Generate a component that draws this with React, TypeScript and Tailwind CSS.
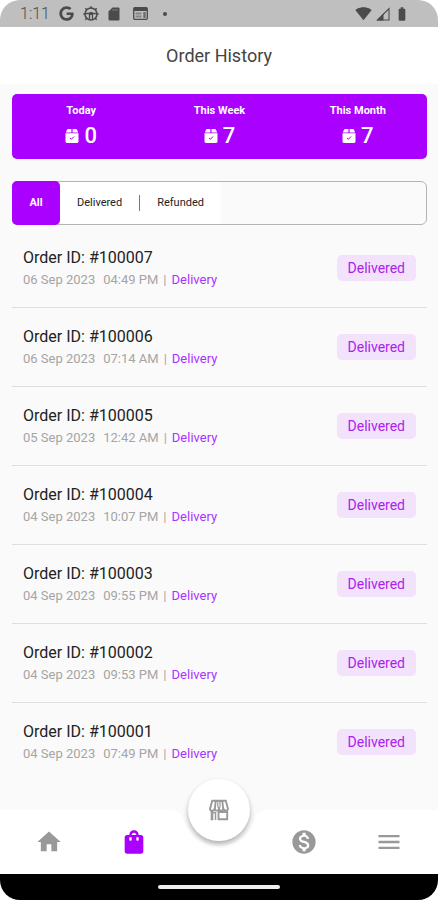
import React from "react";
import { FaGoogle } from "react-icons/fa6";
import {
	MdBatteryFull,
	MdHome,
	MdMenu,
	MdMonetizationOn,
	MdShoppingBag,
	MdSignalWifi4Bar,
} from "react-icons/md";

const stats = [
	{ label: "Today", count: 0 },
	{ label: "This Week", count: 7 },
	{ label: "This Month", count: 7 },
];

const orders = [
	{ id: "100007", date: "06 Sep 2023", time: "04:49 PM" },
	{ id: "100006", date: "06 Sep 2023", time: "07:14 AM" },
	{ id: "100005", date: "05 Sep 2023", time: "12:42 AM" },
	{ id: "100004", date: "04 Sep 2023", time: "10:07 PM" },
	{ id: "100003", date: "04 Sep 2023", time: "09:55 PM" },
	{ id: "100002", date: "04 Sep 2023", time: "09:53 PM" },
	{ id: "100001", date: "04 Sep 2023", time: "07:49 PM" },
];

const BoxIcon = () => (
	<svg width="14" height="14" viewBox="0 0 14 14" fill="none">
		<path d="M3 0h3.400v3.600H.8L2 .8Q2.300 0 3 0Z" fill="#fff" />
		<path d="M11 0H7.600v3.600h5.600L12 .8Q11.700 0 11 0Z" fill="#fff" />
		<path d="M.5 4.300h13v8.300Q13.500 14 12.100 14H1.900Q.5 14 .5 12.600Z" fill="#fff" />
		<path d="m5 9 1.400 1.300L9 7.500" stroke="#aa00ff" strokeWidth="1" />
	</svg>
);

const WheelIcon = () => (
	<svg width="16" height="16" viewBox="0 0 16 16" fill="none" stroke="#4b4b4b">
		<circle cx="8" cy="8" r="6" strokeWidth="1.600" />
		<path d="M2 7.500h12M6.500 8v6M9.500 8v6" strokeWidth="1.300" />
		<circle cx="8" cy="7.500" r="1.800" fill="#4b4b4b" stroke="none" />
		<path
			d="M8 .3v2M2.300 2.300l1.500 1.500M13.700 2.300l-1.500 1.500M.3 8h1.500M15.700 8h-1.500M2.300 13.700l1.500-1.500M13.700 13.700l-1.500-1.500"
			strokeWidth="1.500"
		/>
	</svg>
);

const SdIcon = () => (
	<svg width="12" height="14" viewBox="0 0 12 14">
		<path d="M4.500.5h6Q11.500.5 11.500 1.500v11q0 1-1 1h-9q-1 0-1-1V4.500Z" fill="#4b4b4b" />
		<path d="M5 2v2M7 2v2M9 2v2" stroke="#8a8a8a" strokeWidth=".8" />
	</svg>
);

const WindowIcon = () => (
	<svg width="15" height="13" viewBox="0 0 15 13" fill="none">
		<rect x=".7" y=".7" width="13.600" height="11.600" rx="1" stroke="#4b4b4b" strokeWidth="1.300" />
		<path d="M1 2.500h13" stroke="#4b4b4b" strokeWidth="3" />
		<path d="M2.500 6.500h6M2.500 9.500h6" stroke="#858585" strokeWidth="1.800" />
		<path d="M11.500 5v6" stroke="#6c6c6c" strokeWidth="2.400" />
	</svg>
);

const SignalIcon = () => (
	<svg width="14" height="14" viewBox="0 0 14 14" fill="none">
		<path d="M1.500 13 13 1.500V13Z" stroke="#4b4b4b" strokeWidth="1.100" />
		<path d="M.8 13.500 7.500 6.800v6.700Z" fill="#4b4b4b" />
	</svg>
);

const StoreIcon = () => (
	<svg width="22" height="22" viewBox="0 0 22 22" fill="none" stroke="#999999" strokeWidth="1.900">
		<path d="M4.200 1.800h13.600l2.200 8.200q-.2 1.600-2 1.600t-2.600-1.600q-.4 1.600-2.200 1.600T11 10q-.4 1.600-2.200 1.600T6.600 10q-.6 1.600-2.600 1.600T2 10Z" />
		<path d="M7.700 2 6.800 10M11 8v3M14.300 2l.9 8" />
		<path d="M7.600 2.500h2.200v6M14 2.500h-2v6" strokeWidth="1.200" />
		<path d="M4 11.500v9.800" strokeWidth="2.600" />
		<path d="M3 13.500h4.500v7.500" strokeWidth="1.500" />
		<path d="M10.500 13h8.700v7.300h-8.700Z" />
	</svg>
);

const App = () => {
	return (
		<div className="min-h-screen bg-white font-['Roboto',sans-serif]">
			<div className="min-h-screen w-full flex flex-col overflow-hidden rounded-[20px] bg-[#fafafa]">
				{/* Status bar */}
				<div className="h-[27px] shrink-0 flex items-center justify-between bg-[#bfbfbf] pl-5 pr-7 text-[#4b4b4b]">
					<div className="flex items-center gap-[9px]">
						<span className="text-base leading-5 font-light">1:11</span>
						<FaGoogle size={15} />
						<WheelIcon />
						<SdIcon />
						<div className="pl-1">
							<WindowIcon />
						</div>
						<span className="ml-[6px] size-1 rounded-full bg-[#4b4b4b]" />
					</div>
					<div className="flex items-center gap-1">
						<MdSignalWifi4Bar size={17} />
						<SignalIcon />
						<MdBatteryFull size={16} />
					</div>
				</div>

				<header className="h-[57px] shrink-0 flex items-center justify-center bg-white">
					<h1 className="text-lg text-[#444444]">Order History</h1>
				</header>

				<main className="flex-1 pl-3 pr-[11px] pt-[10px]">
					{/* Totals */}
					<section className="h-[65px] grid grid-cols-3 rounded-[5px] bg-[#aa00ff] text-white">
						{stats.map((stat) => (
							<div key={stat.label} className="flex flex-col items-center pt-2">
								<p className="text-[11px] leading-[18px] font-bold">{stat.label}</p>
								<p className="flex items-center gap-[5px] text-[22px] leading-8 font-medium">
									<BoxIcon />
									{stat.count}
								</p>
							</div>
						))}
					</section>

					{/* Filter */}
					<div className="mt-[22px] h-11 flex rounded-md border border-[#b4b4b4] text-[11px]">
						<button className="-my-px -ml-px w-12 rounded-[5px] bg-[#aa00ff] font-bold text-white">
							All
						</button>
						<div className="flex items-center bg-white text-[#222222]">
							<button className="h-full px-[17px]">Delivered</button>
							<span className="h-4 w-px bg-[#777777]" />
							<button className="h-full px-[17px]">Refunded</button>
						</div>
					</div>

					{/* Orders */}
					<ul className="mt-1">
						{orders.map((order) => (
							<li
								key={order.id}
								className="h-[79px] flex items-center justify-between border-b border-[#dedede] pl-[11px] pr-[11px] last:border-transparent"
							>
								<div>
									<p className="text-base leading-6 text-[#222222]">
										Order ID: #{order.id}
									</p>
									<p className="flex gap-[5px] text-[13px] leading-5 text-[#a5a5a5]">
										<span>{order.date}</span>
										<span className="pl-[3px]">{order.time}</span>
										<span>|</span>
										<span className="text-[#aa33ff]">Delivery</span>
									</p>
								</div>
								<span className="rounded-[5px] bg-[#f2e2fc] px-[11px] py-1 text-sm leading-[18px] text-[#aa22ee]">
									Delivered
								</span>
							</li>
						))}
					</ul>
				</main>

				{/* Bottom navigation */}
				<nav className="relative h-16 shrink-0 grid grid-cols-5 place-items-center bg-white px-[6px] text-[#999999]">
					<button aria-label="Home">
						<MdHome size={28} />
					</button>
					<button aria-label="Orders" className="text-[#aa00ff]">
						<MdShoppingBag size={28} />
					</button>
					<div className="absolute left-1/2 top-0 -translate-x-1/2">
						<svg width="96" height="38" viewBox="0 0 96 38">
							<path d="M0 0Q9 0 12 8C17 25 31 36 48 36S79 25 84 8Q87 0 96 0Z" fill="#fafafa" />
						</svg>
					</div>
					<button
						aria-label="Store"
						className="absolute left-1/2 top-0 size-[62px] -translate-1/2 flex items-center justify-center rounded-full bg-white shadow-[0_3px_5px_rgba(0,0,0,0.3)]"
					>
						<StoreIcon />
					</button>
					<button aria-label="Payments" className="col-start-4">
						<MdMonetizationOn size={28} />
					</button>
					<button aria-label="Menu">
						<MdMenu size={28} />
					</button>
				</nav>

				<footer className="h-[26px] shrink-0 flex items-center justify-center bg-black">
					<span className="h-1 w-[122px] rounded-full bg-[#eeeeee]" />
				</footer>
			</div>
		</div>
	);
};

export default App;
